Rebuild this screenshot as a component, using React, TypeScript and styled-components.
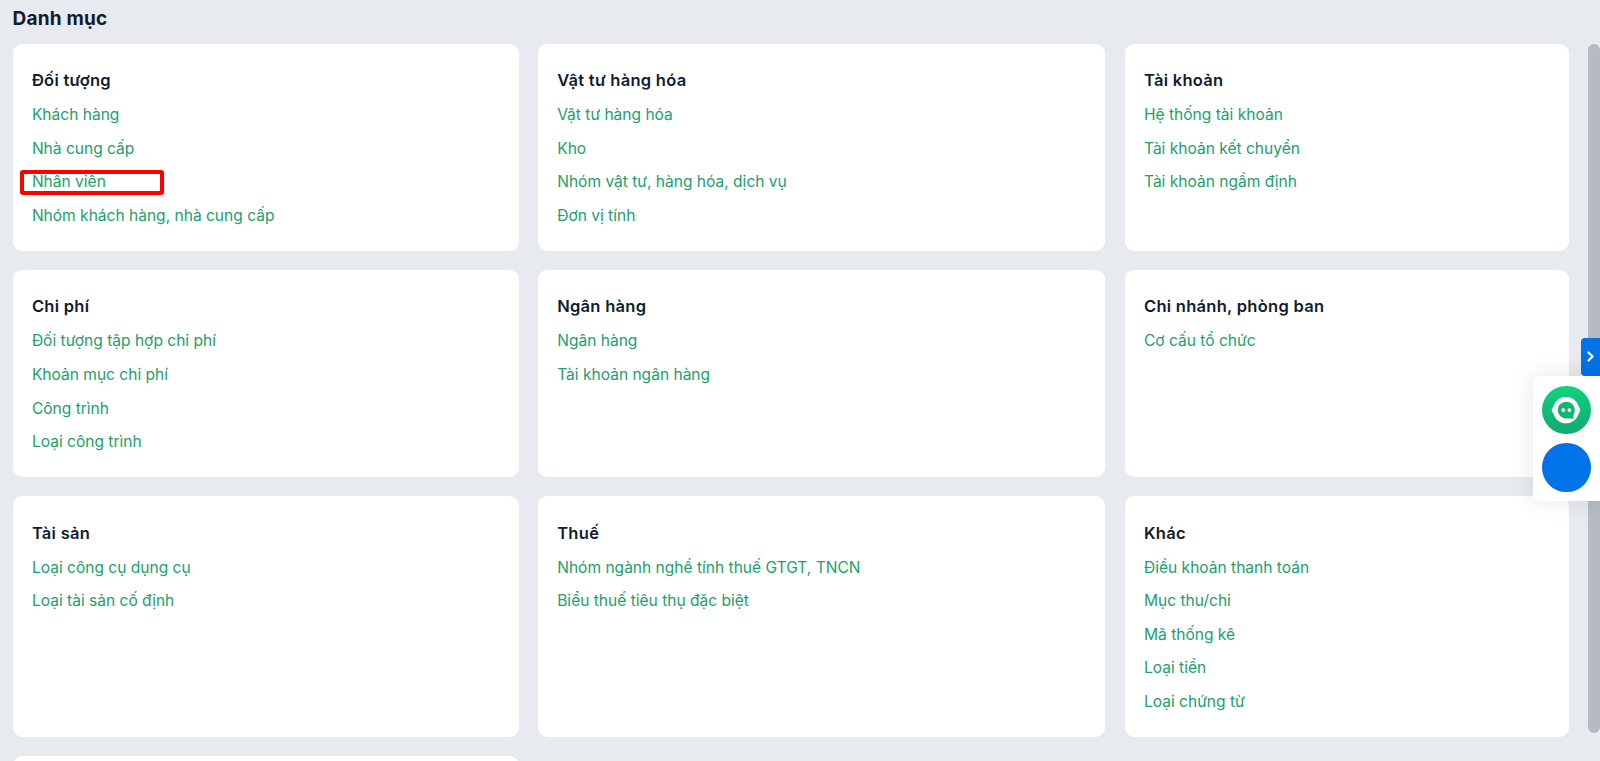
import {FunctionComponent} from 'react'
import styled, {createGlobalStyle} from 'styled-components'

interface Category {
    title: string
    links: string[]
}

const categories: Category[] = [
    {title: 'Đối tượng', links: ['Khách hàng', 'Nhà cung cấp', 'Nhân viên', 'Nhóm khách hàng, nhà cung cấp']},
    {title: 'Vật tư hàng hóa', links: ['Vật tư hàng hóa', 'Kho', 'Nhóm vật tư, hàng hóa, dịch vụ', 'Đơn vị tính']},
    {title: 'Tài khoản', links: ['Hệ thống tài khoản', 'Tài khoản kết chuyển', 'Tài khoản ngầm định']},
    {title: 'Chi phí', links: ['Đối tượng tập hợp chi phí', 'Khoản mục chi phí', 'Công trình', 'Loại công trình']},
    {title: 'Ngân hàng', links: ['Ngân hàng', 'Tài khoản ngân hàng']},
    {title: 'Chi nhánh, phòng ban', links: ['Cơ cấu tổ chức']},
    {title: 'Tài sản', links: ['Loại công cụ dụng cụ', 'Loại tài sản cố định']},
    {title: 'Thuế', links: ['Nhóm ngành nghề tính thuế GTGT, TNCN', 'Biểu thuế tiêu thụ đặc biệt']},
    {title: 'Khác', links: ['Điều khoản thanh toán', 'Mục thu/chi', 'Mã thống kê', 'Loại tiền', 'Loại chứng từ']},
]

const highlightedLink = 'Nhân viên'

const GlobalStyle = createGlobalStyle`
  * {
    box-sizing: border-box;
  }

  body {
    margin: 0;
    background: #e7ebf0;
    font-family: Inter, sans-serif;
    overflow: hidden;
  }
`

const Page = styled.div`
  display: flex;
  flex-direction: column;
  height: 100vh;
  overflow: hidden;
`

const PageTitle = styled.h1`
  flex: none;
  height: 44px;
  margin: 0;
  padding-left: 12.5px;
  color: #111c2e;
  font-size: 19px;
  font-weight: 650;
  letter-spacing: 0.2px;
  line-height: 37px;
`

const Content = styled.main`
  display: flex;
  flex: 1;
  justify-content: space-between;
  min-height: 0;
  padding-left: 12.5px;
`

const CardGrid = styled.div`
  display: grid;
  grid-template-columns: 506px 567.5px 444.5px;
  grid-auto-rows: max-content;
  gap: 19.3px;
  align-content: start;
`

const Card = styled.section`
  min-height: 60px;
  padding: 20.3px 19.4px 18.1px;
  border-radius: 9.6px;
  background: #fff;
`

const CardTitle = styled.h2`
  margin: 0;
  color: #111c2e;
  font-size: 16.5px;
  font-weight: 640;
  letter-spacing: 0.28px;
  line-height: 33.9px;
`

const LinkList = styled.ul`
  margin: 0;
  padding: 0;
  list-style: none;
`

const LinkItem = styled.li`
  position: relative;
  height: 33.65px;
  line-height: 33.65px;
`

const CategoryLink = styled.a`
  color: #22a06b;
  font-size: 15.55px;
  text-decoration: none;
`

const Highlight = styled.span`
  position: absolute;
  top: 5px;
  left: -11.5px;
  width: 143.5px;
  height: 25px;
  border: 4px solid #fe0000;
  border-radius: 3px;
`

const ScrollThumb = styled.div`
  width: 12px;
  height: 689px;
  border-radius: 6px;
  background: #b6bbc3;
`

const SideWidget = styled.aside`
  position: absolute;
  top: 337.5px;
  right: 0;
  display: flex;
  flex-direction: column;
  align-items: flex-end;
`

const ExpandButton = styled.button`
  display: flex;
  align-items: center;
  justify-content: center;
  width: 19px;
  height: 38.5px;
  padding: 0;
  border: none;
  border-radius: 4px 0 0 4px;
  background: #0073e6;
`

const SupportPanel = styled.div`
  display: flex;
  flex-direction: column;
  gap: 9.4px;
  width: 67px;
  height: 125px;
  padding: 9.6px 0 0 9.3px;
  border-radius: 8px 0 0 8px;
  background: #fff;
  box-shadow: 0 0 24px rgba(0, 0, 0, 0.1);
`

const RoundButton = styled.button<{$background: string}>`
  display: flex;
  align-items: center;
  justify-content: center;
  width: 48.3px;
  height: 48.3px;
  padding: 0;
  border: none;
  border-radius: 50%;
  background: ${({$background}) => $background};
`

const ChevronIcon: FunctionComponent = () => (
    <svg width="19" height="38" viewBox="0 0 19 38" fill="none">
        <path d="M7.500 14.500l4 4-4 4" stroke="#fff" strokeWidth="2.3" strokeLinecap="round" strokeLinejoin="round"/>
    </svg>
)

const AssistantIcon: FunctionComponent = () => (
    <svg width="48" height="48" viewBox="0 0 48 48">
        <path
            d="M24 11c5.800 0 10.300 3.300 12 8.100l2 3.800c.4.800.4 1.600 0 2.400l-2 3.700C34.300 34 29.800 37.300 24 37.300S13.700 34 12 29l-2-3.700c-.4-.8-.4-1.600 0-2.400l2-3.800C13.700 14.300 18.200 11 24 11z"
            fill="#fff"
        />
        <path d="M24.300 15.800c4.900 0 8.500 3.700 8.500 8.300 0 2.300-.6 4.200-1.600 5.700.1 1.100.4 1.900 1 2.700h-7.900c-4.900 0-8.500-3.700-8.500-8.400s3.600-8.300 8.500-8.300z" fill="#12b673"/>
        <circle cx="21.300" cy="24.100" r="1.900" fill="#fff"/>
        <circle cx="27.400" cy="24.100" r="1.900" fill="#fff"/>
    </svg>
)

const App: FunctionComponent = () => (
    <Page>
        <GlobalStyle/>
        <PageTitle>Danh mục</PageTitle>
        <Content>
            <CardGrid>
                {categories.map(({title, links}) => (
                    <Card key={title}>
                        <CardTitle>{title}</CardTitle>
                        <LinkList>
                            {links.map((link) => (
                                <LinkItem key={link}>
                                    <CategoryLink>{link}</CategoryLink>
                                    {link === highlightedLink && <Highlight/>}
                                </LinkItem>
                            ))}
                        </LinkList>
                    </Card>
                ))}
                {/* The next row starts just above the fold. */}
                <Card/>
            </CardGrid>
            <ScrollThumb/>
        </Content>
        <SideWidget>
            <ExpandButton aria-label="Mở rộng">
                <ChevronIcon/>
            </ExpandButton>
            <SupportPanel>
                <RoundButton $background="linear-gradient(#0fd47c, #12a870)" aria-label="Trợ lý">
                    <AssistantIcon/>
                </RoundButton>
                <RoundButton $background="#0073e6" aria-label="Hỗ trợ"/>
            </SupportPanel>
        </SideWidget>
    </Page>
)

export default App
